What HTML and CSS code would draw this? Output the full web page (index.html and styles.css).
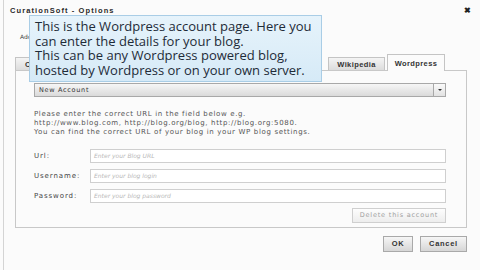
FILE: index.html
```html
<!DOCTYPE html>
<html>
<head>
<meta charset="utf-8">
<link rel="stylesheet" href="styles.css">
</head>
<body>
<div class="window">
  <div class="titlebar">
    <span class="title">CurationSoft - Options</span>
    <span class="close">&#x2716;</span>
  </div>
  <div class="intro">Add your accounts.</div>
  <div class="tabs">
    <div class="tab">CurationSoft</div>
    <div class="spacer"></div>
    <div class="tab wiki">Wikipedia</div>
    <div class="tab active">Wordpress</div>
  </div>
  <div class="panel">
    <div class="select">
      <span class="select-text">New Account</span>
      <span class="select-btn"><span class="arrow"></span></span>
    </div>
    <div class="help">
      <div>Please enter the correct URL in the field below e.g.</div>
      <div>http://www.blog.com, http://blog.org/blog, http://blog.org:5080.</div>
      <div>You can find the correct URL of your blog in your WP blog settings.</div>
    </div>
    <div class="form">
      <label class="label">Url:</label>
      <div class="input">Enter your Blog URL</div>
      <label class="label">Username:</label>
      <div class="input">Enter your blog login</div>
      <label class="label">Password:</label>
      <div class="input">Enter your blog password</div>
    </div>
    <div class="delete-row">
      <div class="delete">Delete this account</div>
    </div>
  </div>
  <div class="buttons">
    <div class="btn ok">OK</div>
    <div class="btn cancel">Cancel</div>
  </div>
</div>
<div class="tooltip">This is the Wordpress account page. Here you<br>can enter the details for your blog.<br>This can be any Wordpress powered blog,<br>hosted by Wordpress or on your own server.</div>
</body>
</html>
```
FILE: styles.css
```css
html, body {
  margin: 0;
  padding: 0;
  width: 480px;
  height: 270px;
  background: #fbfbfb;
  overflow: hidden;
  font-family: "DejaVu Sans", Verdana, sans-serif;
}
.window {
  margin-left: 3px;
  height: 270px;
  border-left: 1px solid #d4d4d4;
  box-sizing: border-box;
  position: relative;
}
.titlebar {
  display: flex;
  justify-content: space-between;
  align-items: center;
  height: 21px;
  padding: 0 9px 0 6px;
  font-family: "Liberation Sans", Arial, sans-serif;
}
.title {
  font-weight: bold;
  font-size: 7.5px;
  letter-spacing: 1.1px;
  color: #2a2a2a;
}
.close {
  font-size: 8px;
  font-weight: bold;
  color: #222;
}
.intro {
  padding-left: 16px;
  margin-top: 12px;
  font-size: 6px;
  color: #444;
  height: 16px;
}
.tabs {
  display: flex;
  align-items: flex-end;
  margin-left: 11px;
  width: 452px;
  height: 16px;
  margin-top: 5px;
  padding-right: 22px;
  box-sizing: border-box;
}
.tab {
  font-family: "Liberation Sans", Arial, sans-serif;
  font-weight: bold;
  font-size: 7.5px;
  letter-spacing: 0.4px;
  color: #333;
  height: 13px;
  line-height: 13px;
  padding: 0 9px;
  margin-right: 2px;
  background: linear-gradient(#f4f4f4, #dcdcdc);
  border: 1px solid #c4c4c4;
  border-bottom: none;
  box-sizing: border-box;
}
.tab.wiki {
  width: 57px;
  text-align: center;
  padding: 0;
}
.tab.active {
  height: 17px;
  line-height: 17px;
  background: #fbfbfb;
  margin-right: 0;
  position: relative;
  top: 1px;
  width: 58px;
  text-align: center;
  padding: 0;
}
.spacer { flex: 1; }
.panel {
  margin-left: 11px;
  width: 452px;
  box-sizing: border-box;
  border: 1px solid #c8c8c8;
  padding: 12px 20px 4px 18px;
}
.select {
  display: flex;
  height: 14px;
  border: 1px solid #a8a8a8;
  box-sizing: border-box;
  background: linear-gradient(#f6f6f6, #dadada);
}
.select-text {
  flex: 1;
  font-size: 6.5px;
  letter-spacing: 0.7px;
  line-height: 12px;
  padding-left: 4px;
  color: #333;
}
.select-btn {
  width: 11px;
  border-left: 1px solid #a8a8a8;
  background: linear-gradient(#fafafa, #e2e2e2);
  display: flex;
  align-items: center;
  justify-content: center;
}
.arrow {
  width: 0;
  height: 0;
  border-left: 2px solid transparent;
  border-right: 2px solid transparent;
  border-top: 2px solid #333;
}
.help {
  margin-top: 13px;
  font-size: 7px;
  letter-spacing: 0.65px;
  line-height: 9px;
  color: #555;
}
.form {
  display: grid;
  grid-template-columns: 56px 1fr;
  row-gap: 6px;
  margin-top: 12px;
  align-items: center;
}
.label {
  font-size: 7px;
  letter-spacing: 0.9px;
  color: #444;
}
.input {
  height: 14px;
  border: 1px solid #cfcfcf;
  box-sizing: border-box;
  background: #fff;
  font-size: 6px;
  font-style: italic;
  color: #b8b8b8;
  line-height: 12px;
  padding-left: 3px;
}
.delete-row {
  display: flex;
  justify-content: flex-end;
  margin-top: 5px;
}
.delete {
  width: 94px;
  height: 15px;
  box-sizing: border-box;
  border: 1px solid #cfcfcf;
  background: linear-gradient(#fdfdfd, #ededed);
  font-size: 6.5px;
  letter-spacing: 0.8px;
  color: #a0a0a0;
  text-align: center;
  line-height: 13px;
}
.buttons {
  display: flex;
  justify-content: flex-end;
  gap: 7px;
  width: 452px;
  margin-left: 11px;
  margin-top: 8px;
}
.btn {
  height: 16px;
  box-sizing: border-box;
  border: 1px solid #a9a9a9;
  background: linear-gradient(#f6f6f6, #d6d6d6);
  font-family: "Liberation Sans", Arial, sans-serif;
  font-weight: bold;
  font-size: 7.5px;
  letter-spacing: 0.7px;
  color: #333;
  text-align: center;
  line-height: 14px;
}
.ok { width: 30px; }
.cancel { width: 47px; }
.tooltip {
  position: absolute;
  left: 29px;
  top: 15px;
  width: 293px;
  height: 67px;
  box-sizing: border-box;
  border: 1px solid #a9cde6;
  background: linear-gradient(#e6f3fb, #d6eaf7);
  font-family: "Open Sans", sans-serif;
  font-size: 13px;
  line-height: 14.5px;
  color: #1e2b38;
  padding: 3px 0 0 5px;
  white-space: nowrap;
}
```
